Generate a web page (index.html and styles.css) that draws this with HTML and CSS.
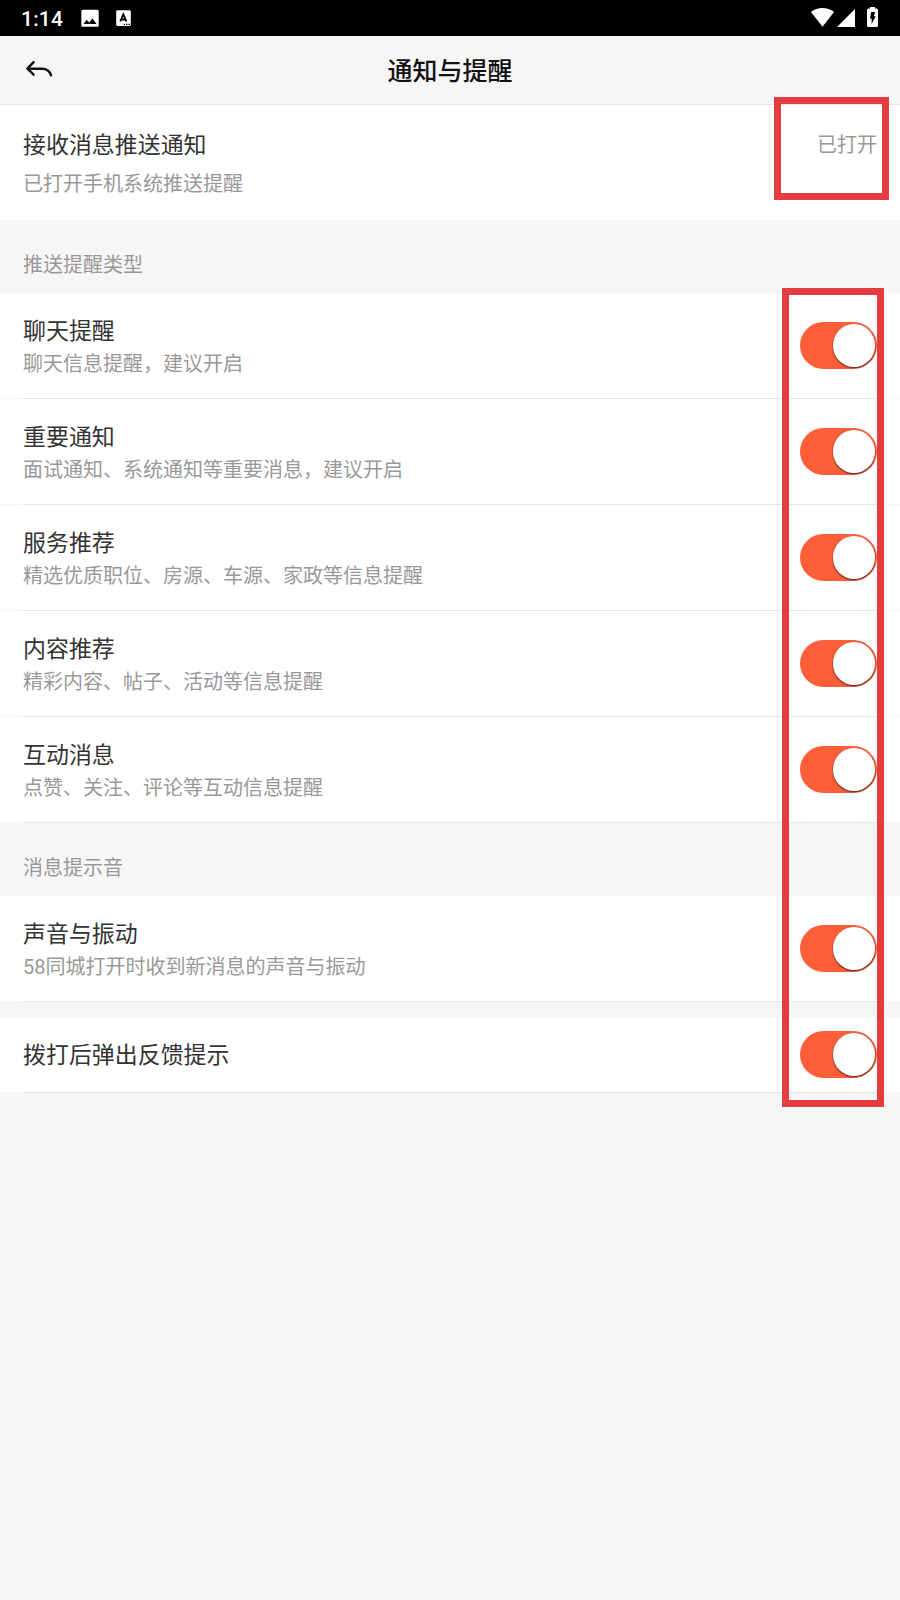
FILE: index.html
```html
<!DOCTYPE html>
<html lang="zh-CN">
<head>
<meta charset="utf-8">
<title>通知与提醒</title>
<link rel="stylesheet" href="styles.css">
</head>
<body>
<div class="screen">
  <div class="status">
    <span class="clock">1:14</span>
    <svg class="picture" width="18" height="18" viewBox="0 0 18 18"><rect x=".3" y=".8" width="17.4" height="17" rx="1.500" fill="#fff"/><path d="M2.500 15 5.700 10.800l2.400 2.800L11.400 9.500l4.200 5.500z" fill="#000"/></svg>
    <svg class="letter" width="16" height="16" viewBox="0 0 16 16"><rect x=".2" y=".3" width="14.600" height="15.700" rx="1.400" fill="#fff"/><path d="M4.300 11.500 7.300 4.300l3.200 7.200M5.500 9.500h4" fill="none" stroke="#000" stroke-width="1.800"/><path d="M7.700 14.300h1.400m1 0h1.400m1 0h1.400" stroke="#000" stroke-width="1.300"/></svg>
    <svg class="wifi" width="23" height="19" viewBox="0 0 23 19"><path d="M0 4C6.500-1.200 16.500-1.200 23 4L11.500 18.800z" fill="#fff"/></svg>
    <svg class="signal" width="18" height="18" viewBox="0 0 18 18"><path d="M18 0v18H0z" fill="#fff"/></svg>
    <svg class="battery" width="11" height="20" viewBox="0 0 11 20"><path d="M3 0h5v1.500h1.500Q11 1.500 11 3v15.500q0 1.500-1.500 1.500h-8Q0 20 0 18.500V3q0-1.500 1.500-1.500H3z" fill="#fff"/><path d="M4.200 5h4L6.800 9.200h2L4.600 17v-5.500H3z" fill="#000"/></svg>
  </div>
  <header class="header">
    <svg class="back" width="28" height="18" viewBox="0 0 28 18"><path d="M8.600 2.200 2.400 8.700l6.200 6M2.400 8.700h14.400q7.400 0 9.200 6.700" fill="none" stroke="#111" stroke-width="2.400" stroke-linecap="round" stroke-linejoin="round"/></svg>
    <h1 class="heading">通知与提醒</h1>
  </header>
  <main>
    <section class="push">
      <div><h2 class="title">接收消息推送通知</h2><p class="sub">已打开手机系统推送提醒</p></div>
      <span class="state">已打开</span>
    </section>
    <div class="label">推送提醒类型</div>
    <div class="row"><div><h2 class="title">聊天提醒</h2><p class="sub">聊天信息提醒，建议开启</p></div><i class="toggle"></i></div>
    <div class="row"><div><h2 class="title">重要通知</h2><p class="sub">面试通知、系统通知等重要消息，建议开启</p></div><i class="toggle"></i></div>
    <div class="row"><div><h2 class="title">服务推荐</h2><p class="sub">精选优质职位、房源、车源、家政等信息提醒</p></div><i class="toggle"></i></div>
    <div class="row"><div><h2 class="title">内容推荐</h2><p class="sub">精彩内容、帖子、活动等信息提醒</p></div><i class="toggle"></i></div>
    <div class="row"><div><h2 class="title">互动消息</h2><p class="sub">点赞、关注、评论等互动信息提醒</p></div><i class="toggle"></i></div>
    <div class="label">消息提示音</div>
    <div class="row"><div><h2 class="title">声音与振动</h2><p class="sub"><span class="num">58</span>同城打开时收到新消息的声音与振动</p></div><i class="toggle"></i></div>
    <div class="row short"><h2 class="title">拨打后弹出反馈提示</h2><i class="toggle"></i></div>
  </main>
  <div class="mark mark-state"></div>
  <div class="mark mark-toggles"></div>
</div>
</body>
</html>
```
FILE: styles.css
```css
* { box-sizing: border-box; }
body { margin: 0; background: #f6f6f6; font-family: "Noto Sans CJK SC", sans-serif; }
.screen { position: relative; width: 900px; height: 1600px; overflow: hidden; background: #f6f6f6; }
.status { display: flex; align-items: flex-start; height: 36px; background: #000; color: #fff; padding: 0 22px 0 21px; }
.clock { width: 60px; font: 500 21px/36px Roboto, sans-serif; letter-spacing: .2px; padding-top: 1px; }
.picture { margin-top: 9px; }
.letter { margin: 10px 0 0 17px; }
.wifi { margin: 8px 0 0 auto; }
.signal { margin: 9px 0 0 3px; }
.battery { margin: 7px 0 0 12px; }
.header { display: grid; grid-template-columns: 100px 1fr 100px; height: 69px; border-bottom: 1px solid #e7e7e7; }
.back { margin: 24px 0 0 25px; }
.heading { margin: 0; text-align: center; font-size: 25px; font-weight: 500; line-height: 66px; color: #111; }
.title, .sub { margin: 0; font-weight: 400; white-space: nowrap; }
.title { font-size: 22.95px; line-height: 28px; padding-bottom: 4px; color: #333; }
.sub { font-size: 20px; line-height: 32px; color: #999; }
.num { font-family: Roboto, sans-serif; }
.push { display: flex; justify-content: space-between; height: 115px; padding: 24px 23px 0; background: #fff; }
.push .sub { margin-top: 6px; }
.state { font-size: 20px; line-height: 30px; color: #999; }
.label { height: 73px; padding: 28px 23px 0; font-size: 20px; line-height: 32px; color: #999; }
.row { display: flex; justify-content: space-between; height: 106px; padding: 22px 23px 0; background: linear-gradient(#e6e6e6, #e6e6e6) 23px 105px / 854px 1px no-repeat, linear-gradient(#fff, #fff) 0 0 / 100% 105px no-repeat; }
.short { height: 76px; margin-top: 15px; background-position: 23px 75px, 0 0; background-size: 854px 1px, 100% 75px; }
.toggle { flex: none; position: relative; width: 77px; height: 47px; margin-top: 7px; border-radius: 24px; background: #ff5f38; overflow: hidden; }
.toggle::after { content: ""; position: absolute; left: 32.5px; top: 2.2px; width: 42.6px; height: 42.6px; border-radius: 50%; background: #fff; box-shadow: 0 1px 2px rgba(0,0,0,.7); }
.short .toggle { margin-top: -8px; }
.mark { position: absolute; border: 7px solid #e43d3f; }
.mark-state { left: 774px; top: 97px; width: 115px; height: 103px; }
.mark-toggles { left: 782px; top: 288px; width: 102px; height: 819px; }
```
